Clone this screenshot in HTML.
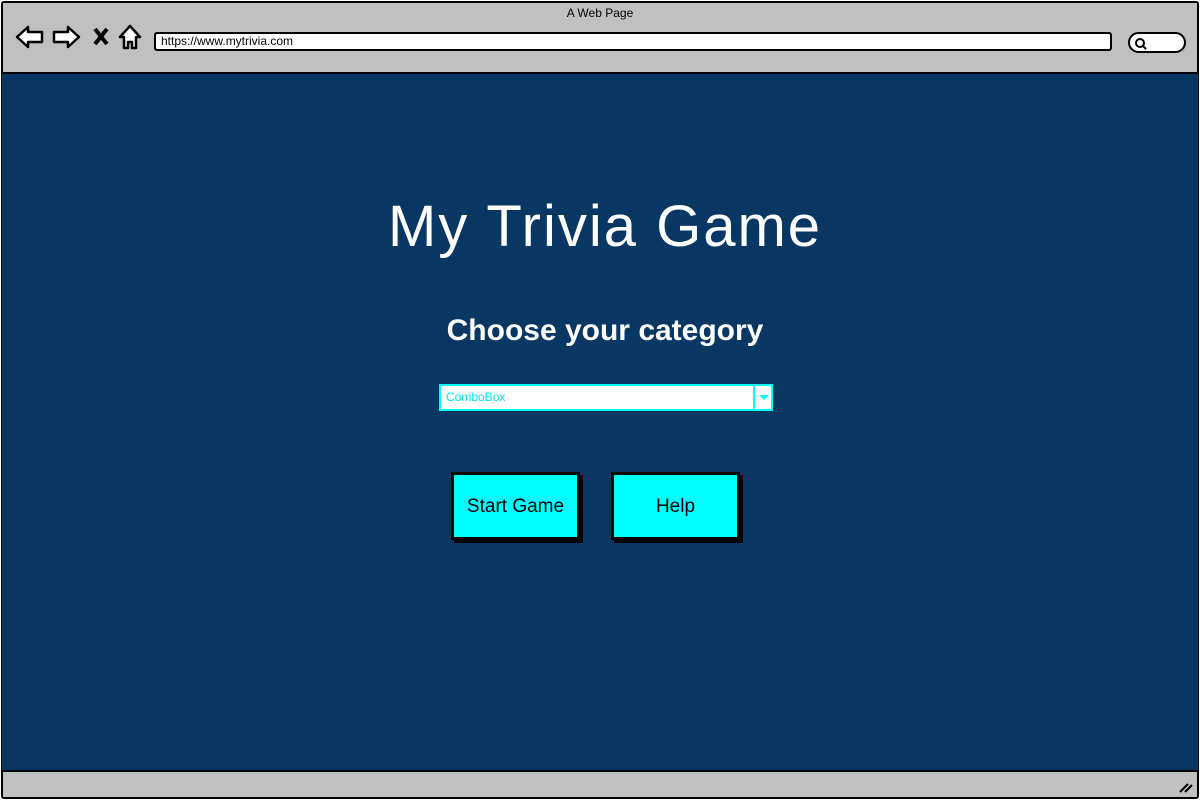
<!DOCTYPE html>
<html><head><meta charset="utf-8"><style>
*{margin:0;padding:0;box-sizing:border-box}
body{width:1200px;height:800px;background:#fff;position:relative;overflow:hidden;font-family:"Liberation Sans",sans-serif}
.frame{position:absolute;left:1px;top:1px;width:1198px;height:798px;border:2px solid #000;border-radius:3px;background:#c0c0c0}
.content{position:absolute;left:2px;top:72px;width:1196px;height:700px;background:#083763;border-top:2px solid #000;border-bottom:2px solid #000}
.title{position:absolute;top:6px;left:0;width:1200px;text-align:center;font-size:12px;color:#000}
.url{position:absolute;left:154px;top:32px;width:958px;height:19px;background:#fff;border:2px solid #000;border-radius:3px;font-size:12px;padding-left:5px;line-height:15px}
.search{position:absolute;left:1128px;top:32px;width:58px;height:21px;background:#fff;border:2px solid #000;border-radius:11px}
h1{position:absolute;top:193px;left:0;width:1210px;text-align:center;color:#fff;font-size:58px;font-weight:normal;letter-spacing:2px}
h2{position:absolute;top:314px;left:0;width:1210px;text-align:center;color:#fff;font-size:30px;font-weight:bold}
.combo{position:absolute;left:439px;top:384px;width:334px;height:27px;background:#fff;border:2px solid #00ffff;color:#00e5ee;font-size:12px;line-height:23px;padding-left:5px}
.combo .arr{position:absolute;right:0;top:0;width:18px;height:23px;border-left:2px solid #00ffff}
.combo .arr:after{content:"";position:absolute;left:4px;top:9px;border:5px solid transparent;border-top:5px solid #00ffff;border-bottom:0}
.btn{position:absolute;top:472px;height:68px;background:#00ffff;border:3px solid #000;box-shadow:3px 3px 0 #000;font-size:19px;text-align:center;line-height:64px;color:#000}
</style></head><body>
<div class="frame"></div>
<div class="title">A Web Page</div>
<svg style="position:absolute;left:14px;top:22px" width="132" height="30" viewBox="0 0 132 30">
<path d="M3 15 L14 5 L14 10 L28 10 L28 20 L14 20 L14 25 Z" fill="#fff" stroke="#000" stroke-width="2.5" stroke-linejoin="round"/>
<path d="M65 15 L54 5 L54 10 L40 10 L40 20 L54 20 L54 25 Z" fill="#fff" stroke="#000" stroke-width="2.5" stroke-linejoin="round"/>
<path d="M81 7 L93 22 M93 7 L81 22" stroke="#000" stroke-width="4"/>
<path d="M116 4 L106 15 L110 15 L110 26 L114 26 L114 20 L118 20 L118 26 L122 26 L122 15 L126 15 Z" fill="#fff" stroke="#000" stroke-width="2.5" stroke-linejoin="round"/>
</svg>
<div class="url">https://www.mytrivia.com</div>
<div class="search"><svg style="position:absolute;left:4px;top:3px" width="14" height="14"><circle cx="6" cy="6" r="4" fill="none" stroke="#000" stroke-width="2"/><path d="M9 9 L12 12" stroke="#000" stroke-width="2"/></svg></div>
<div class="content"></div>
<svg style="position:absolute;left:1178px;top:780px" width="16" height="14"><path d="M2 12 L10 4 M7 12 L14 5" stroke="#000" stroke-width="2"/></svg>
<h1>My Trivia Game</h1>
<h2>Choose your category</h2>
<div class="combo">ComboBox<div class="arr"></div></div>
<div class="btn" style="left:451px;width:129px">Start Game</div>
<div class="btn" style="left:611px;width:129px">Help</div>
</body></html>
